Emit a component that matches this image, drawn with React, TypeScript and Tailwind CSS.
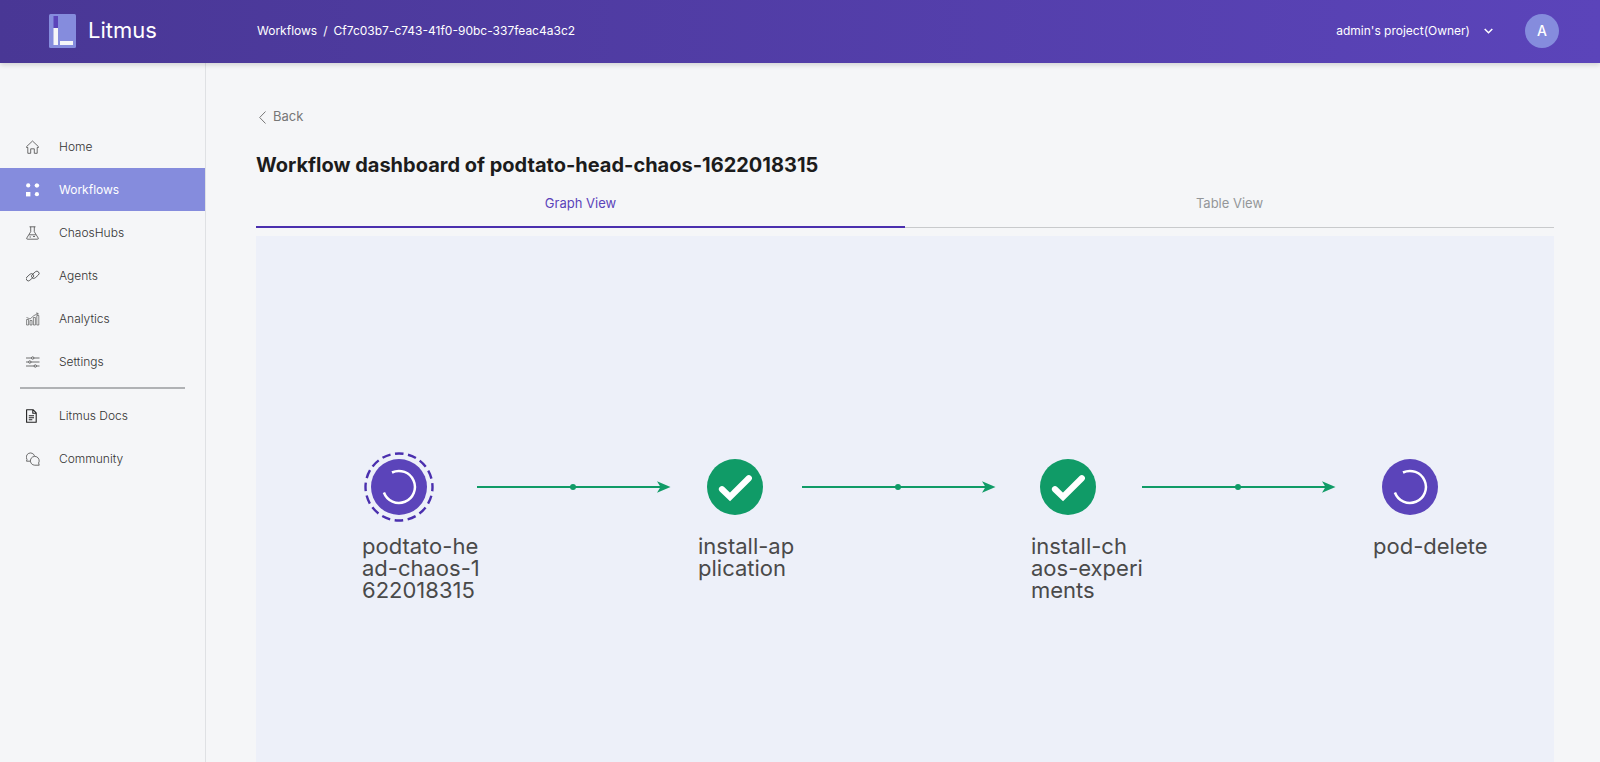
import type { ReactNode } from "react";

function Icon({ children, className = "" }: { children: ReactNode; className?: string }) {
  return (
    <svg
      className={"size-[14px] shrink-0 " + className}
      viewBox="0 0 14 14"
      fill="none"
      stroke="currentColor"
      strokeWidth="0.7"
      strokeLinejoin="round"
      aria-hidden="true"
    >
      {children}
    </svg>
  );
}

const icons = {
  home: (
    <Icon>
      <path d="M.6 6.6 6.5 1l5.900 5.600v.9h-1.200v5.800H8.300V8.800H4.700v4.500H1.800V7.500H.6z" />
    </Icon>
  ),
  workflows: (
    <Icon>
      <g fill="currentColor" stroke="none">
        <circle cx="2.2" cy="2.4" r="2.1" />
        <path d="m10.900.3 1.700.6.6 1.600-.6 1.600-1.700.6-1.700-.6-.6-1.600.6-1.600z" />
        <rect x="0" y="9" width="4.4" height="4.4" />
        <circle cx="10.9" cy="11.2" r="2.1" />
      </g>
    </Icon>
  ),
  hubs: (
    <Icon>
      <path d="M3.500.8h6M4.700.8v4.900L.8 12q-.5 1.200.7 1.200h10q1.200 0 .7-1.200L8.300 5.700V.8M3.100 8.800h6.800M3.500 11H5M7 10.500h2" />
    </Icon>
  ),
  agents: (
    <Icon>
      <rect x="-.4" y="6" width="8.6" height="4.4" rx="2.2" transform="rotate(-42 4 8.2)" />
      <rect x="5" y="3.6" width="8.6" height="4.4" rx="2.2" transform="rotate(-42 9.3 5.8)" />
    </Icon>
  ),
  analytics: (
    <Icon className="opacity-80">
      <path d="M.6 13V7.500h2V13zM4 13V8.500h2V13zM7.400 13V5.500h2V13zM10.800 13V3.500h2V13z" />
      <path d="m.5 5.500 3.600 1.400L7.900 3.600l4-2M10 1l2.200.4-.6 1.700" />
    </Icon>
  ),
  settings: (
    <Icon>
      <path d="M0 3h5.500M7.900 3h5.600M0 7h2.600M5 7h8.500M0 11h8.100M10.500 11h3" />
      <circle cx="6.7" cy="3" r="1.2" />
      <circle cx="3.8" cy="7" r="1.2" />
      <circle cx="9.3" cy="11" r="1.2" />
    </Icon>
  ),
  docs: (
    <Icon className="text-[#222]">
      <path strokeWidth="1.1" d="M.6.700h6.400l3.200 3.200v9.400H.6zM6.800.8v3.400h3.300M2.800 6.700h5.200M2.800 8.700h5.200M2.800 10.700h3.500" />
    </Icon>
  ),
  community: (
    <Icon>
      <path d="M4 9.200H.5l.5-1.700A4.200 4.200 0 1 1 8.500 3.900" />
      <path d="M13.200 13.200H8.700a4.400 4.400 0 1 1 3.900-2.200z" />
    </Icon>
  ),
};

function NavItem({ icon, label, active = false }: { icon: ReactNode; label: string; active?: boolean }) {
  return (
    <a
      href="#"
      aria-current={active ? "page" : undefined}
      className={
        "flex h-[43px] items-center gap-[19px] pl-[26px] text-xs " +
        (active ? "bg-[#858cdd] text-white" : "font-light text-[#333]")
      }
    >
      {icon}
      <span>{label}</span>
    </a>
  );
}

type NodeProps = { status: "running" | "done"; selected?: boolean; lines: string[]; className: string };

function GraphNode({ status, selected = false, lines, className }: NodeProps) {
  return (
    <div className={"absolute top-[216px] " + className}>
      <svg className="h-[70px] w-[74px]" viewBox="-2 0 74 70" fill="none" aria-hidden="true">
        {selected && (
          <circle
            cx="35"
            cy="35"
            r="33.5"
            stroke="#4a2fae"
            strokeWidth="2.4"
            strokeDasharray="8.6 4.555"
            strokeDashoffset="4.3"
          />
        )}
        <circle cx="35" cy="35" r="28" fill={status === "done" ? "#109b67" : "#5b44ba"} />
        {status === "done" ? (
          <path d="M22 37.200 30 45 48.800 26.200" stroke="#fff" strokeWidth="6.2" strokeLinecap="round" />
        ) : (
          <path d="M28 20.500A16 16 0 1 1 19.900 40.500" stroke="#fff" strokeWidth="2.5" />
        )}
      </svg>
      <p className="mt-[13px] text-[22px] leading-[22px] whitespace-nowrap text-[#4a4a4a]">
        {lines.map((line) => (
          <span key={line} className="block">
            {line}
          </span>
        ))}
      </p>
    </div>
  );
}

function Edge({ className }: { className: string }) {
  return (
    <svg className={"absolute top-[244px] h-[14px] w-[194px] " + className} viewBox="0 0 194 14" aria-hidden="true">
      <path d="M0 7h184" stroke="#109b67" strokeWidth="2" />
      <circle cx="96" cy="7" r="3" fill="#109b67" />
      <path d="m180 1.300 13.500 5.700L180 12.700 183.500 7z" fill="#109b67" />
    </svg>
  );
}

export default function App() {
  return (
    <div className="flex h-screen min-h-[600px] flex-col overflow-hidden bg-[#f5f6f8] font-['Inter','Liberation_Sans',sans-serif]">
      <header className="z-10 flex h-[63px] shrink-0 items-center bg-linear-to-r from-[#493795] to-[#5b44ba] pr-[41px] pb-0.5 pl-[49px] text-white shadow-[0_2px_5px_rgba(0,0,0,0.15)]">
        <a href="#" className="flex w-[208px] items-center gap-3">
          <svg className="h-[34px] w-[27px]" viewBox="0 0 27 34" aria-hidden="true">
            <rect width="27" height="34" rx="1.5" fill="#858cdd" />
            <path d="M4.500 2H9v12H4.500z" fill="#5b44ba" />
            <path d="M4.500 14H9v17H4.500zM11 27h13v4H11z" fill="#f5f6f8" />
          </svg>
          <span className="text-[22px]">Litmus</span>
        </a>
        <nav aria-label="Breadcrumb" className="flex gap-1.5 text-xs">
          <a href="#">Workflows</a>
          <span>/</span>
          <a href="#">Cf7c03b7-c743-41f0-90bc-337feac4a3c2</a>
        </nav>
        <button type="button" className="ml-auto flex items-center gap-[14px] text-xs">
          admin's project(Owner)
          <svg className="h-2 w-[9px]" viewBox="0 0 9 8" fill="none" stroke="currentColor" strokeWidth="1.5" aria-hidden="true">
            <path d="m.7 2 3.800 3.800L8.300 2" />
          </svg>
        </button>
        <button type="button" className="ml-8 flex size-[34px] items-center justify-center rounded-full bg-[#858cdd] text-sm font-medium">
          A
        </button>
      </header>

      <div className="flex min-h-0 flex-1">
        <aside className="w-[206px] shrink-0 border-r border-[#dfe1e4] pt-[62px]">
          <nav aria-label="Main">
            <NavItem icon={icons.home} label="Home" />
            <NavItem icon={icons.workflows} label="Workflows" active />
            <NavItem icon={icons.hubs} label="ChaosHubs" />
            <NavItem icon={icons.agents} label="Agents" />
            <NavItem icon={icons.analytics} label="Analytics" />
            <NavItem icon={icons.settings} label="Settings" />
            <hr className="mx-5 mt-1 mb-[5px] border-t-2 border-[#b0b2b5]" />
            <NavItem icon={icons.docs} label="Litmus Docs" />
            <NavItem icon={icons.community} label="Community" />
          </nav>
        </aside>

        <main className="flex min-w-0 flex-1 flex-col pr-[46px] pl-[50px]">
          <a href="#" className="mt-11 flex h-5 items-center gap-[7px] self-start pl-[3px] text-[13px] text-[#777]">
            <svg className="h-[13px] w-[7px]" viewBox="0 0 7 13" fill="none" stroke="currentColor" aria-hidden="true">
              <path d="M6.500.5.700 6.500l5.800 6" />
            </svg>
            Back
          </a>
          <h1 className="mt-6 text-xl leading-7 font-bold text-[#1c1c1c]">
            Workflow dashboard of podtato-head-chaos-1622018315
          </h1>
          <div role="tablist" className="grid grid-cols-2 text-[13px]">
            <button type="button" role="tab" aria-selected="true" className="h-[49px] border-b-2 border-[#4a2fae] pt-0.5 text-[#5b44ba]">
              Graph View
            </button>
            <button type="button" role="tab" aria-selected="false" className="h-[49px] border-b border-[#c8cacc] pt-0.5 text-[#949699]">
              Table View
            </button>
          </div>
          <section aria-label="Workflow graph" className="relative mt-2 min-h-0 flex-1 overflow-hidden bg-[#edf0f9]">
            <GraphNode className="left-[106px]" status="running" selected lines={["podtato-he", "ad-chaos-1", "622018315"]} />
            <Edge className="left-[221px]" />
            <GraphNode className="left-[442px]" status="done" lines={["install-ap", "plication"]} />
            <Edge className="left-[546px]" />
            <GraphNode className="left-[775px]" status="done" lines={["install-ch", "aos-experi", "ments"]} />
            <Edge className="left-[886px]" />
            <GraphNode className="left-[1117px]" status="running" lines={["pod-delete"]} />
          </section>
        </main>
      </div>
    </div>
  );
}
